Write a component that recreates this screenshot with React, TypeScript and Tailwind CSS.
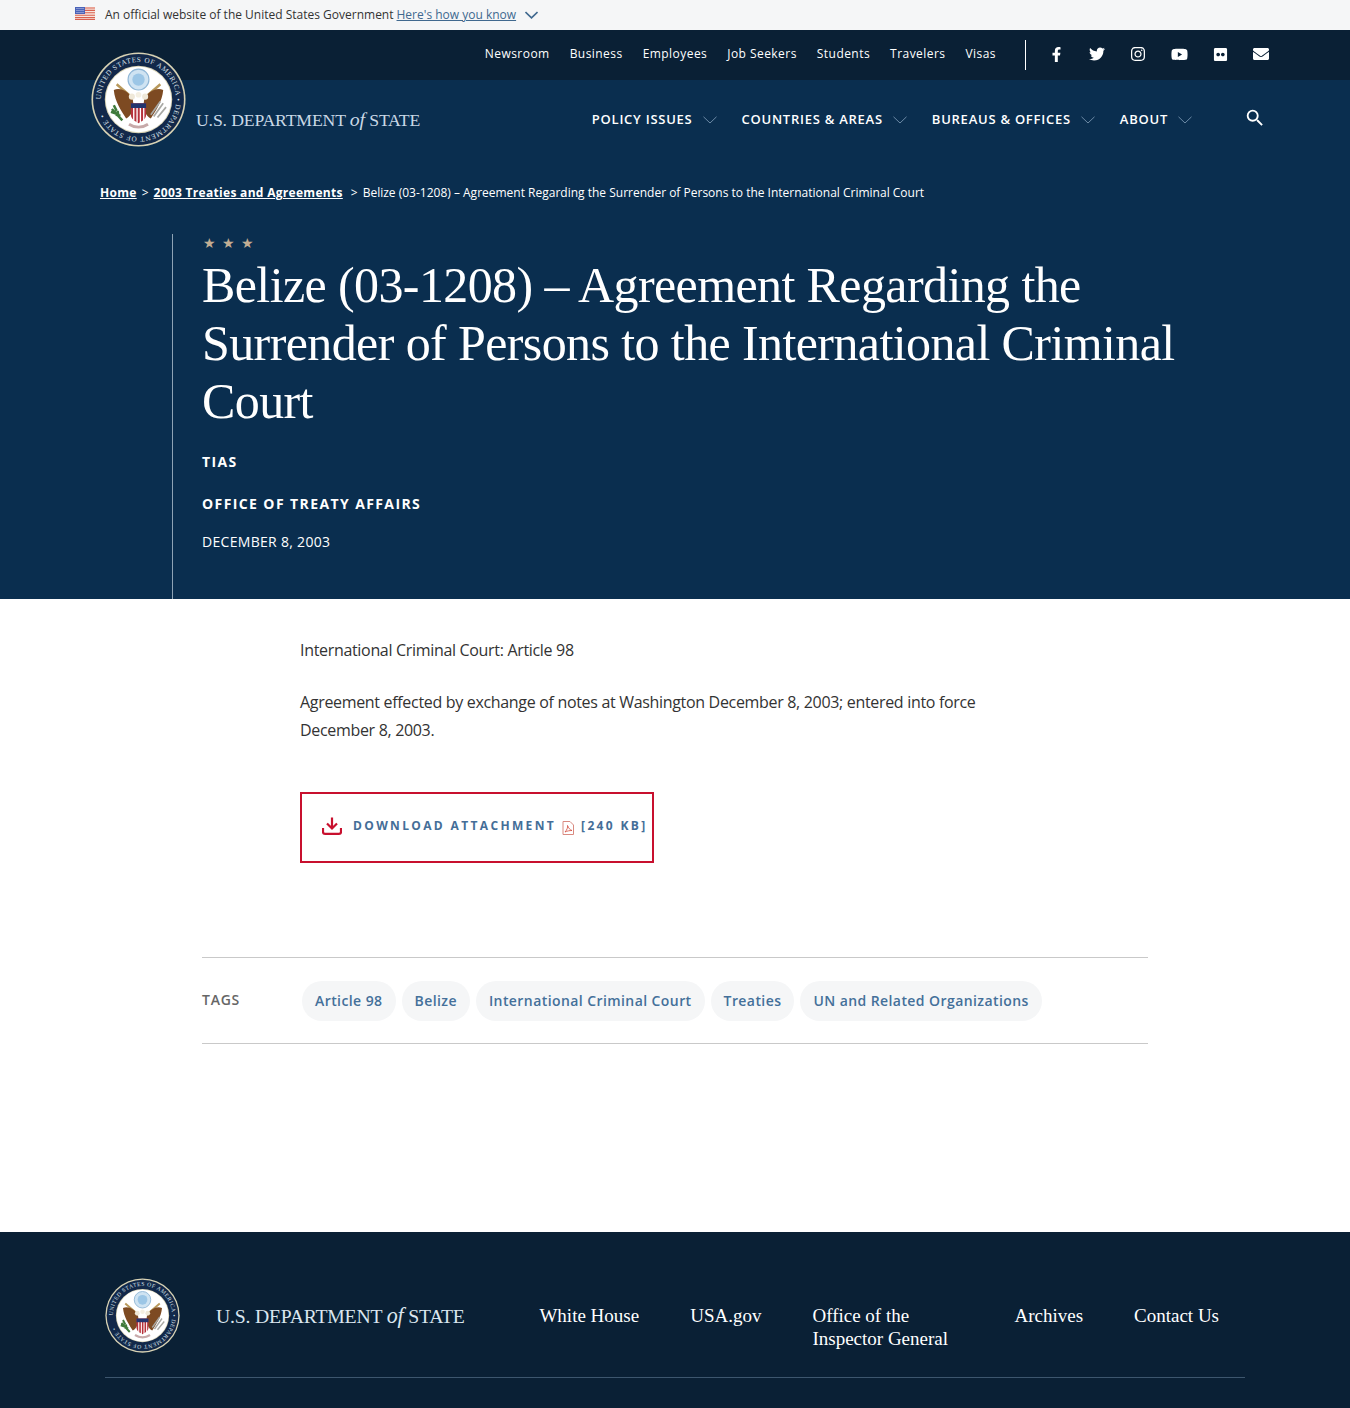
import React from "react";
import { FaFacebookF, FaTwitter, FaInstagram, FaYoutube, FaFlickr, FaEnvelope } from "react-icons/fa";
import { MdSearch } from "react-icons/md";

const sans = "font-['Open_Sans',sans-serif]";
const serif = "font-['Liberation_Serif',serif]";

function Seal({ id, className }: { id: string; className: string }) {
  return (
    <svg viewBox="0 0 100 100" className={className}>
      <defs>
        <path id={id} d="M50 50 m-39.5 0 a39.5 39.5 0 1 1 79 0 a39.5 39.5 0 1 1 -79 0" />
      </defs>
      <circle cx="50" cy="50" r="49.5" fill="#d8d2b4" />
      <circle cx="50" cy="50" r="47.8" fill="#12284a" />
      <circle cx="50" cy="50" r="35.5" fill="#d8d2b4" />
      <circle cx="50" cy="50" r="34.5" fill="#ffffff" />
      <text fontSize="7.6" fill="#d9e0e8" fontFamily="Liberation Serif, serif" letterSpacing="0.65">
        <textPath href={`#${id}`} startOffset="0">UNITED STATES OF AMERICA • DEPARTMENT OF STATE •</textPath>
      </text>
      <circle cx="50" cy="29" r="11" fill="#cfe3f2" stroke="#8fb6d6" strokeWidth="1.2" />
      <circle cx="50" cy="29" r="6.5" fill="#9cc6e6" />
      <path d="M27 34 L41 46 M73 34 L59 46" stroke="#b8985a" strokeWidth="2.6" />
      <path d="M24 40 C32 36 42 44 44 50 C46 60 42 68 37 70 C32 62 25 52 24 40Z" fill="#7d4a22" />
      <path d="M76 40 C68 36 58 44 56 50 C54 60 58 68 63 70 C68 62 75 52 76 40Z" fill="#7d4a22" />
      <circle cx="43" cy="47" r="3.2" fill="#efe8d8" />
      <circle cx="57" cy="47" r="3.2" fill="#efe8d8" />
      <circle cx="50" cy="45" r="3" fill="#f4efe2" />
      <path d="M42 54 H58 V66 C58 71 53 73 50 75 C47 73 42 71 42 66Z" fill="#b6323c" />
      <path d="M42 54 H58 V59 H42Z" fill="#23356e" />
      <path d="M45 59 V72 M48.5 59 V74.5 M52 59 V74.5 M55.5 59 V72" stroke="#ffffff" strokeWidth="1.4" />
      <path d="M22 60 L33 72 M24 56 l3 6 M21 63 l6 2 M26 66 l5 1 M28 62 l1 6" stroke="#3f7a3a" strokeWidth="2.6" />
      <path d="M66 68 L76 54 M70 69 L79 58 M63 66 L73 52" stroke="#a8a8a4" strokeWidth="1.8" />
      <path d="M40 76 C46 80 54 80 60 76" stroke="#c7a9a9" strokeWidth="3" fill="none" />
    </svg>
  );
}

function Logotype({ className }: { className: string }) {
  return (
    <span className={`${serif} whitespace-nowrap ${className}`}>
      U.S. DEPARTMENT <i className="text-[1.12em]">of</i> STATE
    </span>
  );
}

function Chevron({ className }: { className: string }) {
  return (
    <svg viewBox="0 0 14 8" className={className} fill="none" stroke="currentColor">
      <path d="M0.5 0.8 L7 7 L13.5 0.8" strokeWidth="1" />
    </svg>
  );
}

function Flag() {
  return (
    <svg viewBox="0 0 20 13" className="w-5 h-[13px] shrink-0">
      <rect width="20" height="13" fill="#f6e4dc" />
      <path d="M0 1h20M0 3.4h20M0 5.8h20M0 8.2h20M0 10.6h20M0 12.5h20" stroke="#d9604f" strokeWidth="1.1" />
      <rect width="10" height="7" fill="#4b63b8" />
      <path d="M1.5 1.5h7M1.5 3.5h7M1.5 5.5h7" stroke="#dfe6f7" strokeWidth="0.8" strokeDasharray="1 1" />
    </svg>
  );
}

const navLinks = ["Newsroom", "Business", "Employees", "Job Seekers", "Students", "Travelers", "Visas"];
const mainNav = ["Policy Issues", "Countries & Areas", "Bureaus & Offices", "About"];
const tags = ["Article 98", "Belize", "International Criminal Court", "Treaties", "UN and Related Organizations"];

export default function App() {
  return (
    <div className={`${sans} bg-white w-[1350px] min-h-[1408px]`}>
      {/* gov banner */}
      <div className="h-[30px] bg-[#f5f6f7] flex items-center pl-[75px] text-[12px] text-[#333]">
        <span className="-mt-[4px]"><Flag /></span>
        <span className="ml-[10px]">An official website of the United States Government</span>
        <a className="ml-[3px] text-[#40698f] underline">Here's how you know</a>
        <Chevron className="ml-[9px] w-[13px] h-[8px] text-[#40698f] [&_path]:[stroke-width:1.8px]" />
      </div>

      {/* utility bar */}
      <div className="relative h-[50px] bg-[#0a2035] flex items-center justify-end pr-[81px]">
        <nav className="flex gap-5 text-[12px] tracking-[0.45px] text-white -mt-[3px]">
          {navLinks.map((l) => <a key={l}>{l}</a>)}
        </nav>
        <span className="ml-[29px] w-px h-[30px] bg-white" />
        <div className="ml-[23px] w-[220px] flex justify-between items-center text-white text-[16px] -mt-[2px]">
          <FaFacebookF className="text-[15px]" />
          <FaTwitter />
          <FaInstagram />
          <FaYoutube className="text-[17px]" />
          <FaFlickr className="text-[15px]" />
          <FaEnvelope />
        </div>
      </div>

      {/* hero */}
      <header className="relative bg-[#0a2e4f] h-[519px]">
        <Seal id="seal-top" className="absolute left-[91px] -top-[28px] w-[95px] h-[95px]" />
        <div className="flex items-center h-[80px] pl-[196px] pr-[84px]">
          <Logotype className="text-[17.7px] text-[#c9d8e6] -mt-[1px] tracking-[-0.15px]" />
          <nav className="ml-auto flex items-center text-[13px] font-semibold uppercase tracking-[0.75px] text-white gap-[25px]">
            {mainNav.map((n) => (
              <a key={n} className="flex items-center gap-[10px]">
                {n}
                <Chevron className="w-[14px] h-[8px] text-[#6d8aa6]" />
              </a>
            ))}
          </nav>
          <MdSearch className="ml-[52px] -mt-[4px] text-white text-[22px]" />
        </div>

        <div className="pl-[100px] pt-[24px] text-[12px] leading-[18px] text-white flex whitespace-nowrap">
          <a className="font-bold underline tracking-[0.3px]">Home</a>
          <span className="mx-[5px]">&gt;</span>
          <a className="font-bold underline tracking-[0.3px]">2003 Treaties and Agreements</a>
          <span className="ml-[8px] mr-[5px]">&gt;</span>
          <span>Belize (03-1208) – Agreement Regarding the Surrender of Persons to the International Criminal Court</span>
        </div>

        <div className="mt-[32px] ml-[172px] h-[365px] border-l border-[#8ea3b5] pl-[29px] pr-[140px]">
          <div className="flex gap-[6px] text-[#c2ad93] text-[14px] leading-[18px] pl-[1px]">
            <span>★</span><span>★</span><span>★</span>
          </div>
          <h1 className={`${serif} text-white text-[50px] leading-[58px] tracking-[-0.6px] mt-[4px]`}>
            Belize (03-1208) – Agreement Regarding the Surrender of Persons to the International Criminal Court
          </h1>
          <p className="mt-[22px] text-[14px] leading-[20px] font-bold uppercase tracking-[1.4px] text-white">TIAS</p>
          <p className="mt-[22px] text-[14px] leading-[20px] font-bold uppercase tracking-[1.4px] text-white">Office of Treaty Affairs</p>
          <p className="mt-[18px] text-[14px] leading-[20px] uppercase text-white tracking-[0.3px]">December 8, 2003</p>
        </div>
      </header>

      {/* body */}
      <main className="h-[633px] pt-[37px]">
        <div className="ml-[300px] w-[700px] text-[16px] leading-[28px] text-[#333] tracking-[-0.32px]">
          <p>International Criminal Court: Article 98</p>
          <p className="mt-[24px]">Agreement effected by exchange of notes at Washington December 8, 2003; entered into force December 8, 2003.</p>
        </div>

        <a className="ml-[300px] mt-[48px] w-[354px] h-[71px] border-2 border-[#c8102e] flex items-center pl-[20px] text-[12px] font-bold tracking-[2.35px] text-[#446e98] whitespace-nowrap">
          <svg viewBox="0 0 20 18" className="w-5 h-[18px] shrink-0 -mt-[4px]" fill="none" stroke="#c8102e" strokeWidth="2.2">
            <path d="M10 0.5 V11 M5 6.5 L10 11.5 L15 6.5" />
            <path d="M1 11 V15 C1 16 1.8 16.8 3 16.8 H17 C18.2 16.8 19 16 19 15 V11" />
          </svg>
          <span className="ml-[11px] -mt-[3px]">DOWNLOAD ATTACHMENT</span>
          <svg viewBox="0 0 12 14" className="ml-[6px] w-3 h-[14px] shrink-0" fill="#fff" stroke="#d98a80" strokeWidth="1">
            <path d="M1 .5 H8 L11.5 4 V13.5 H1Z" />
            <path d="M3 11 C5 9 6 6 5.5 4.5 C6.5 7 8 9 10 9.5 C7.5 9.5 5 10 3 11Z" stroke="#d2483a" strokeWidth=".8" />
          </svg>
          <span className="ml-[7px] -mt-[3px]">[240 KB]</span>
        </a>

        <div className="mx-[202px] mt-[94px] h-[87px] border-y border-[#c9c9c9] flex items-center">
          <span className="w-[100px] text-[14px] font-semibold text-[#666] tracking-[0.75px] -mt-[2px]">TAGS</span>
          <div className="flex gap-[6px]">
            {tags.map((t) => (
              <a key={t} className="h-10 px-[13px] flex items-center rounded-[20px] bg-[#f5f6f7] text-[14px] font-semibold text-[#44709a] tracking-[0.42px] whitespace-nowrap">{t}</a>
            ))}
          </div>
        </div>
      </main>

      {/* footer */}
      <footer className="h-[176px] bg-[#0a2035] px-[105px] pt-[46px]">
        <div className="flex items-start h-[100px] border-b border-[#3d566e] relative">
          <Seal id="seal-foot" className="w-[75px] h-[75px] shrink-0" />
          <Logotype className="ml-[36px] mt-[25px] text-[19.7px] leading-[26px] text-[#dbe6ef] tracking-[-0.2px]" />
          <nav className={`${serif} ml-auto flex mt-[26px] mr-[26px] text-[19px] leading-[23px] text-white gap-[51px]`}>
            <a>White House</a>
            <a>USA.gov</a>
            <a className="w-[151px]">Office of the<br />Inspector General</a>
            <a>Archives</a>
            <a>Contact Us</a>
          </nav>
        </div>
      </footer>
    </div>
  );
}
